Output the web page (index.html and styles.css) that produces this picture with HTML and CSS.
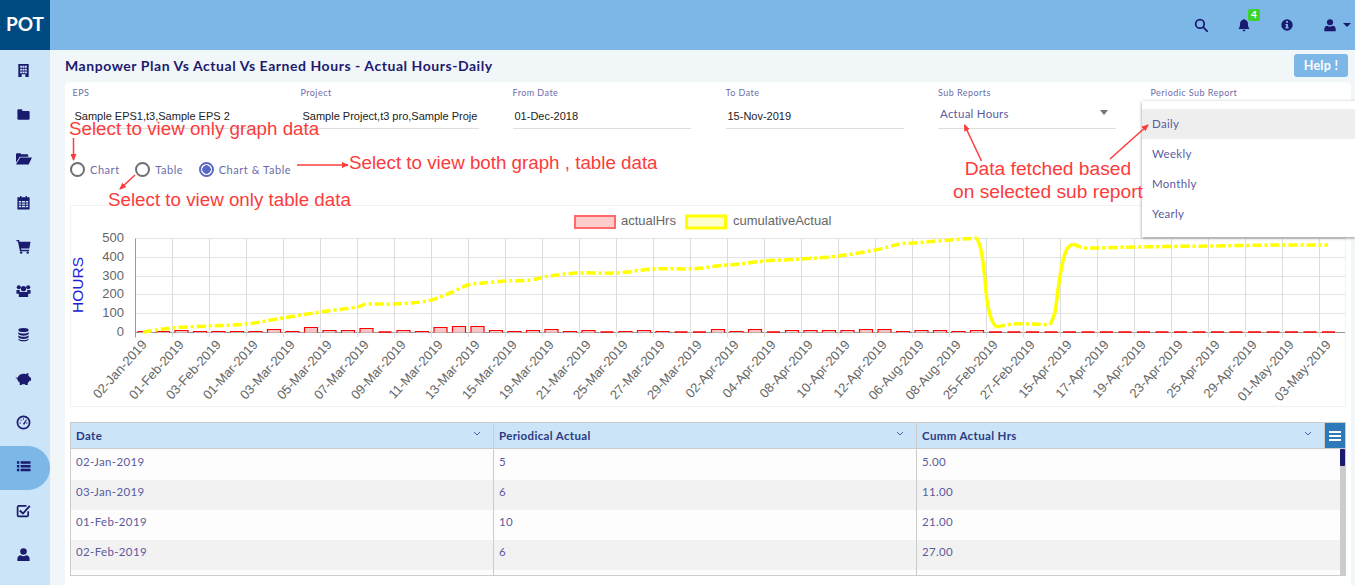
FILE: index.html
```html
<!DOCTYPE html>
<html lang="en">

<head>
    <meta charset="UTF-8">
    <meta name="viewport" content="width=device-width, initial-scale=1.0">
    <title>Manpower Plan Vs Actual Vs Earned Hours</title>
    <link rel="stylesheet" href="styles.css">
</head>

<body>
    <header class="topbar">
        <div class="logo">POT</div>
        <div class="top-icons">
            <svg class="top-icon" viewBox="0 0 16 16"><circle cx="6.8" cy="6.8" r="4.9" class="line"/><path d="M10.5 10.5 15 15" class="line"/></svg>
            <span class="bell">
                <svg class="top-icon" viewBox="0 0 16 16"><path d="M8 1c.6 0 1 .4 1 1 2.3.5 3.5 2.3 3.5 4.5 0 3.5 1 4.8 2 6H1.500c1-1.200 2-2.500 2-6C3.500 4.300 4.700 2.500 7 2c0-.6.400-1 1-1zM6.300 13.500h3.400C9.700 14.500 9 15.200 8 15.200s-1.700-.7-1.700-1.700z"/></svg>
                <span class="badge">4</span>
            </span>
            <svg class="top-icon" viewBox="0 0 16 16"><path fill-rule="evenodd" d="M8 1.500a6.500 6.500 0 1 1 0 13 6.500 6.500 0 0 1 0-13zM6.900 3.500v2h2.200v-2zM6 6.800V8h.9v2.700H6V12h4v-1.300h-.9V6.800z"/></svg>
            <span class="user-menu">
                <svg class="top-icon" viewBox="0 0 16 16"><circle cx="8" cy="4.800" r="3.500"/><path d="M1.500 15v-2.500c0-2.300 1.700-3.700 3.500-3.700 1 .7 2 1 3 1s2-.3 3-1c1.800 0 3.500 1.400 3.500 3.700V15z"/></svg>
                <i class="caret"></i>
            </span>
        </div>
    </header>

    <div class="page">
        <nav class="sidebar">
            <a class="nav-item"><svg class="nav-icon" viewBox="0 0 16 16"><path fill-rule="evenodd" d="M2.500 1h11v14h-11zM4.500 3v2h2V3zm2.500 0v2h2V3zm2.500 0v2h2V3zm-5 3v2h2V6zm2.500 0v2h2V6zm2.500 0v2h2V6zm-5 3v2h2V9zm2.500 0v2h2V9zm2.500 0v2h2V9zM6 12v3h4v-3z"/></svg></a>
            <a class="nav-item"><svg class="nav-icon" viewBox="0 0 16 16"><path d="M1.500 3.500c0-.6.400-1 1-1h3.300c.6 0 1 .4 1 1v.7h6.700c.6 0 1 .4 1 1v7.300c0 .6-.4 1-1 1h-11c-.6 0-1-.4-1-1z"/></svg></a>
            <a class="nav-item"><svg class="nav-icon wide" viewBox="0 0 18 16"><path d="M1 12.500V3.500c0-.6.400-1 1-1h3.500c.6 0 1 .4 1 1h6.500c.6 0 1 .4 1 1V6H5L1 12.500zM5.500 7H18l-3.500 7.500H1z"/></svg></a>
            <a class="nav-item"><svg class="nav-icon" viewBox="0 0 16 16"><path fill-rule="evenodd" d="M1.500 2.500h2.800V1h1.500v1.500h4.400V1h1.500v1.500h2.800v13h-13zM3 6.500V8h2.500V6.500zm3.300 0V8h3.400V6.500zm4.200 0V8H13V6.500zM3 9v1.500h2.500V9zm3.300 0v1.500h3.400V9zm4.200 0v1.500H13V9zM3 11.500V13h2.500v-1.500zm3.300 0V13h3.400v-1.500zm4.200 0V13H13v-1.500z"/></svg></a>
            <a class="nav-item"><svg class="nav-icon" viewBox="0 0 16 16"><path d="M.5 1h2.800l.5 2H15.500l-1.300 7H5.300l.3 1.500h8.400V13H4.200L2 2.500H.5z"/><circle cx="5.500" cy="14.500" r="1.300"/><circle cx="12.500" cy="14.500" r="1.300"/></svg></a>
            <a class="nav-item"><svg class="nav-icon" viewBox="0 0 16 16"><circle cx="3" cy="4.500" r="2.200"/><circle cx="13" cy="4.500" r="2.200"/><circle cx="8" cy="6" r="2.800"/><path d="M.5 7.500h3.500v4H.5zM12 7.500h3.500v4H12zM4 9.500h8c.6 0 1 .4 1 1V15H3v-4.500c0-.6.400-1 1-1z"/></svg></a>
            <a class="nav-item"><svg class="nav-icon" viewBox="0 0 16 16"><ellipse cx="8" cy="3.200" rx="5.500" ry="2.200"/><path d="M2.500 5.200c1 1.200 3 1.700 5.500 1.700s4.500-.5 5.500-1.700v2.300C12.500 8.700 10.500 9.200 8 9.200s-4.500-.5-5.500-1.700zM2.500 8.700c1 1.200 3 1.700 5.500 1.700s4.500-.5 5.500-1.700V11c-1 1.200-3 1.700-5.500 1.700S3.500 12.200 2.500 11zM2.500 12.200c1 1.200 3 1.700 5.500 1.700s4.500-.5 5.500-1.700v.8c0 1.300-2.500 2.300-5.500 2.300s-5.500-1-5.500-2.300z"/></svg></a>
            <a class="nav-item"><svg class="nav-icon wide" viewBox="0 0 18 16"><path d="M.5 6.500c.8.800 1.500.8 2.200.6C3.700 4.800 6 3 9 3c.9 0 1.700.1 2.500.4C12.300 2.500 13.200 2 14.300 2l-.3 2.600c.8.700 1.400 1.400 1.700 2.400H17v3.500h-1.600c-.5.900-1.100 1.600-1.900 2.200V15h-2.800v-1.200c-.5.100-1.100.2-1.700.2s-1.200-.1-1.700-.2V15H5v-2.500C3.400 11.300 2.400 9.800 2.300 8.300 1.400 8.300.8 7.800.5 6.500z"/></svg></a>
            <a class="nav-item"><svg class="nav-icon" viewBox="0 0 16 16"><circle cx="8" cy="8" r="6.500" class="line thick"/><path d="M7.300 9.500 10.800 4.800l.8.500-2.700 5.100zM3.700 8h1.500v1H3.700zM10.800 8h1.500v1h-1.500zM5.300 4.800l1 1-.7.700-1-1zM7.500 3.500h1V5h-1z"/></svg></a>
            <a class="nav-item active"><svg class="nav-icon" viewBox="0 0 16 16"><path d="M1 2.500h2.500V5H1zM5 2.500h10.500V5H5zM1 6.500h2.500V9H1zM5 6.500h10.500V9H5zM1 10.500h2.500V13H1zM5 10.500h10.500V13H5z"/></svg></a>
            <a class="nav-item"><svg class="nav-icon" viewBox="0 0 16 16"><path d="M13 9.500V13c0 .8-.6 1.300-1.300 1.300H3c-.8 0-1.300-.6-1.300-1.300V4.500C1.700 3.700 2.300 3 3 3h7.500" class="line thick"/><path d="M4.800 7.300 7.400 9.800 14 2.300l1.500 1.400-8 8.800L3.300 8.700z"/></svg></a>
            <a class="nav-item"><svg class="nav-icon" viewBox="0 0 16 16"><circle cx="8" cy="4.800" r="3.500"/><path d="M1.500 15v-2.500c0-2.300 1.700-3.700 3.500-3.700 1 .7 2 1 3 1s2-.3 3-1c1.800 0 3.500 1.400 3.500 3.700V15z"/></svg></a>
        </nav>

        <main class="content">
            <div class="title-row">
                <h1 class="title">Manpower Plan Vs Actual Vs Earned Hours - Actual Hours-Daily</h1>
                <button class="help-btn">Help !</button>
            </div>

            <section class="card">
                <div class="filters">
                    <div class="field">
                        <label>EPS</label>
                        <div class="value plain">Sample EPS1,t3,Sample EPS 2</div>
                    </div>
                    <div class="field">
                        <label>Project</label>
                        <div class="value plain">Sample Project,t3 pro,Sample Proje</div>
                    </div>
                    <div class="field">
                        <label>From Date</label>
                        <div class="value plain">01-Dec-2018</div>
                    </div>
                    <div class="field">
                        <label>To Date</label>
                        <div class="value plain">15-Nov-2019</div>
                    </div>
                    <div class="field">
                        <label>Sub Reports</label>
                        <div class="value select">Actual Hours<i class="select-arrow"></i></div>
                    </div>
                    <div class="field">
                        <label>Periodic Sub Report</label>
                    </div>
                </div>

                <div class="radios">
                    <span class="radio"><i class="dot"></i>Chart</span>
                    <span class="radio"><i class="dot"></i>Table</span>
                    <span class="radio on"><i class="dot"></i>Chart &amp; Table</span>
                </div>

                <div class="chart-box">
                    <svg id="chart" class="chart" width="1276" height="200"></svg>
                </div>

                <div class="grid">
                    <div class="grid-head">
                        <div class="head-cell">Date<svg class="chevron" viewBox="0 0 8 5"><path d="M1 1l3 3 3-3"/></svg></div>
                        <div class="head-cell">Periodical Actual<svg class="chevron" viewBox="0 0 8 5"><path d="M1 1l3 3 3-3"/></svg></div>
                        <div class="head-cell">Cumm Actual Hrs<svg class="chevron" viewBox="0 0 8 5"><path d="M1 1l3 3 3-3"/></svg></div>
                        <div class="head-menu"><i></i><i></i><i></i></div>
                    </div>
                    <div class="grid-body">
                        <div class="rows">
                            <div class="row"><span>02-Jan-2019</span><span>5</span><span>5.00</span></div>
                            <div class="row"><span>03-Jan-2019</span><span>6</span><span>11.00</span></div>
                            <div class="row"><span>01-Feb-2019</span><span>10</span><span>21.00</span></div>
                            <div class="row"><span>02-Feb-2019</span><span>6</span><span>27.00</span></div>
                            <div class="row"><span></span><span></span><span></span></div>
                        </div>
                        <div class="scroll"><div class="thumb"></div></div>
                    </div>
                </div>
            </section>
        </main>
    </div>

    <!-- open dropdown -->
    <ul class="dropdown">
        <li class="picked">Daily</li>
        <li>Weekly</li>
        <li>Monthly</li>
        <li>Yearly</li>
    </ul>

    <!-- red notes drawn over the screen -->
    <div class="note n1">Select to view only graph data</div>
    <div class="note n2">Select to view both graph , table data</div>
    <div class="note n3">Select to view only table data</div>
    <div class="note n4">Data fetched based<br>on selected sub report</div>
    <svg class="arrows" width="1355" height="585">
        <defs>
            <marker id="head" markerWidth="7" markerHeight="6" refX="6" refY="3" orient="auto" markerUnits="userSpaceOnUse">
                <path d="M0 0 7 3 0 6z" fill="#fb3c3c" stroke="none"/>
            </marker>
        </defs>
        <path d="M73.5 138V160" marker-end="url(#head)"/>
        <path d="M297 165H348" marker-end="url(#head)"/>
        <path d="M135 175 120 189" marker-end="url(#head)"/>
        <path d="M981.5 161 964.5 125" marker-end="url(#head)"/>
        <path d="M1110 159 1148 125" marker-end="url(#head)"/>
    </svg>

    <script src="chart.js"></script>
</body>

</html>
```

FILE: styles.css
```css
* {
    margin: 0;
    padding: 0;
    box-sizing: border-box;
    list-style: none;
}

html,
body {
    width: 1355px;
    height: 585px;
    overflow: hidden;
}

body {
    position: relative;
    font-family: Lato, "Liberation Sans", sans-serif;
    font-size: 11.5px;
    color: #5b5b9e;
    background: #f1f6f9;
}

/* top bar */
.topbar {
    height: 50px;
    display: flex;
    justify-content: space-between;
    background: #7cb7e8;
}

.logo {
    width: 50px;
    background: #004a82;
    color: #fff;
    font-size: 19px;
    font-weight: 700;
    line-height: 48px;
    text-align: center;
}

.top-icons {
    display: flex;
    align-items: center;
    gap: 29px;
    padding-right: 4px;
}

.top-icon {
    display: block;
    width: 14px;
    height: 14px;
    fill: #1a1a6e;
}

.bell {
    position: relative;
}

.badge {
    position: absolute;
    left: 11px;
    top: -9px;
    width: 12px;
    height: 12px;
    border-radius: 2px;
    background: #3bd32c;
    color: #fff;
    font-size: 10px;
    font-weight: 700;
    line-height: 11px;
    text-align: center;
}

.user-menu {
    display: flex;
    align-items: center;
    gap: 6px;
}

.caret {
    width: 0;
    height: 0;
    border-left: 4px solid transparent;
    border-right: 4px solid transparent;
    border-top: 4px solid #1a1a6e;
}

.line {
    fill: none;
    stroke: #1a1a6e;
    stroke-width: 2;
    stroke-linecap: round;
}

.thick {
    stroke-width: 1.8;
}

.page {
    display: flex;
    height: 535px;
}

/* side menu */
.sidebar {
    width: 50px;
    flex: none;
    background: #cbe4f8;
}

.nav-item {
    height: 44px;
    display: flex;
    align-items: center;
    justify-content: center;
    padding: 0 4px 3px 0;
}

.nav-item.active {
    background: #7cb7e8;
    border-radius: 0 22px 22px 0;
}

.nav-icon {
    width: 15px;
    height: 15px;
    fill: #1a1a6e;
}

.nav-icon.wide {
    width: 17px;
}

.content {
    flex: 1;
    min-width: 0;
    padding: 4px 4px 0 15px;
    display: flex;
    flex-direction: column;
}

.title-row {
    height: 28px;
    display: flex;
    align-items: flex-start;
    justify-content: space-between;
}

.title {
    font-size: 14px;
    font-weight: 700;
    letter-spacing: .55px;
    line-height: 24px;
    color: #1d1a6e;
}

.help-btn {
    width: 54px;
    height: 23px;
    margin-right: 3px;
    border: 0;
    border-radius: 3px;
    background: #7cb7e8;
    color: #fff;
    font: 700 12.5px Lato, sans-serif;
    letter-spacing: .3px;
}

.card {
    flex: 1;
    background: #fff;
    border-radius: 4px 4px 0 0;
    padding: 0 5px;
}

/* filters row */
.filters {
    display: grid;
    grid-template-columns: 228px 212px 213px 212.5px 212.5px 198px;
    height: 46px;
}

.field {
    padding: 5px 0 0 2.5px;
}

.field label {
    display: block;
    font-size: 9px;
    letter-spacing: .45px;
    line-height: 11px;
    color: #6d6da8;
}

.value {
    position: relative;
    width: 178px;
    height: 25px;
    margin-top: 6px;
    border-bottom: 1px solid #ddd;
    white-space: nowrap;
    overflow: hidden;
}

.field:first-child .value {
    width: 193px;
}

.plain {
    font: 11px/24px "Liberation Sans", sans-serif;
    color: #222;
    padding-left: 2px;
}

.select {
    margin-top: 3px;
    height: 28px;
    line-height: 25px;
    padding-left: 2px;
    letter-spacing: .25px;
}

.select-arrow {
    position: absolute;
    right: 8px;
    top: 9px;
    width: 0;
    height: 0;
    border-left: 4.5px solid transparent;
    border-right: 4.5px solid transparent;
    border-top: 5px solid #757575;
}

/* radios */
.radios {
    height: 77px;
    padding-top: 33px;
    display: flex;
    gap: 15.5px;
    font-size: 11px;
    letter-spacing: .55px;
}

.radio {
    display: flex;
    align-items: center;
    height: 16px;
    gap: 5px;
    color: #6d6da8;
}

.dot {
    width: 15px;
    height: 15px;
    border: 2px solid #6f6f6f;
    border-radius: 50%;
    background: #fff;
}

.radio.on .dot {
    border-color: #5968c4;
    background: radial-gradient(circle, #5968c4 0 4px, #fff 4.5px);
}

/* chart */
.chart-box {
    width: 1276px;
    height: 202px;
    border: 1px solid #f2f2f2;
    overflow: hidden;
}

.chart {
    display: block;
    margin: 0 -1px;
}

.axis-text {
    font: 13px "Liberation Sans", sans-serif;
    fill: #666;
}

.axis-title {
    font: 15.5px "Liberation Sans", sans-serif;
    fill: #2020d8;
}

/* table */
.grid {
    width: 1276px;
    height: 154px;
    margin-top: 15px;
    border: 1px solid #ccc;
}

.grid-head {
    height: 26px;
    display: grid;
    grid-template-columns: 423px 423px 408px 20px;
    background: #cbe4f8;
    border-bottom: 1px solid #ccc;
}

.head-cell {
    display: flex;
    align-items: center;
    justify-content: space-between;
    padding: 0 12px 0 5px;
    border-right: 1px solid #ccc;
    font-weight: 700;
    letter-spacing: .35px;
    color: #2c3a84;
}

.chevron {
    width: 8px;
    height: 5px;
    margin-top: -4px;
    fill: none;
    stroke: #5b5b9e;
    stroke-width: 1;
}

.head-menu {
    display: flex;
    flex-direction: column;
    justify-content: center;
    gap: 2px;
    padding: 0 4px;
    background: #2e7ab8;
}

.head-menu i {
    height: 2px;
    background: #fff;
}

.grid-body {
    display: flex;
    height: 126px;
}

.rows {
    flex: 1;
    overflow: hidden;
    background: #fdfdfd;
}

.row {
    height: 30px;
    display: grid;
    grid-template-columns: 423px 423px 1fr;
    letter-spacing: .35px;
    line-height: 24px;
}

.row:first-child {
    height: 31px;
    line-height: 26px;
}

.row span {
    padding-left: 5px;
    border-right: 1px solid #ccc;
}

.row span:last-child {
    border-right: 0;
}

.row:nth-child(even) {
    background: #f2f2f2;
}

.scroll {
    width: 5px;
    background: #ccc;
}

.thumb {
    height: 17px;
    background: #1a1a6e;
    border-radius: 1px;
}

/* dropdown over the page */
.dropdown {
    position: absolute;
    left: 1142px;
    top: 101px;
    width: 213px;
    height: 136px;
    padding-top: 8px;
    background: #fff;
    box-shadow: 0 1px 3px rgba(0, 0, 0, .45);
    letter-spacing: .3px;
}

.dropdown li {
    height: 30px;
    padding-left: 10px;
    line-height: 30px;
}

.dropdown .picked {
    background: #eee;
}

/* annotations */
.note {
    position: absolute;
    font: 18.75px/23px "Liberation Sans", sans-serif;
    color: #fb3c3c;
    white-space: nowrap;
}

.n1 {
    left: 69px;
    top: 117px;
}

.n2 {
    left: 349px;
    top: 151px;
}

.n3 {
    left: 108px;
    top: 188px;
}

.n4 {
    left: 953px;
    top: 157px;
    font-size: 19.2px;
    text-align: center;
}

.arrows {
    position: absolute;
    left: 0;
    top: 0;
    fill: none;
    stroke: #fb3c3c;
    stroke-width: 1.5;
}
```

FILE: chart.js
```js
// svg sits at 70/206 on the page, the numbers below are page pixels
var ox = 70, oy = 206;
var svg = document.getElementById('chart');
var ns = 'http://www.w3.org/2000/svg';
var left = 135.5, right = 1345.5, top0 = 238.5, bottom = 332.5;

function add(name, attrs, text) {
    var el = document.createElementNS(ns, name);
    for (var k in attrs) el.setAttribute(k, attrs[k]);
    if (text) el.textContent = text;
    svg.appendChild(el);
    return el;
}

function gridLine(x1, y1, x2, y2, color) {
    add('line', { x1: x1 - ox, y1: y1 - oy, x2: x2 - ox, y2: y2 - oy, stroke: color, 'stroke-width': 1 });
}

// legend
add('rect', { x: 575 - ox, y: 216 - oy, width: 40, height: 12, fill: '#ffcccc', stroke: '#ff6b6b', 'stroke-width': 2 });
add('text', { x: 621 - ox, y: 225 - oy, 'class': 'axis-text' }, 'actualHrs');
add('rect', { x: 686.5 - ox, y: 216 - oy, width: 39, height: 12, fill: '#ffffcc', stroke: '#ffff00', 'stroke-width': 3 });
add('text', { x: 733 - ox, y: 225 - oy, 'class': 'axis-text' }, 'cumulativeActual');

// y axis
var ys = [238.5, 257.5, 276.5, 294.5, 313.5, 332.5];
var yLabels = ['500', '400', '300', '200', '100', '0'];
for (var i = 0; i < ys.length; i++) {
    gridLine(left, ys[i], right, ys[i], i == 5 ? '#999' : '#e3e3e3');
    add('text', { x: 124 - ox, y: ys[i] + 3.5 - oy, 'text-anchor': 'end', 'class': 'axis-text' }, yLabels[i]);
}
add('text', { transform: 'translate(' + (83 - ox) + ',' + (285 - oy) + ') rotate(-90)', 'text-anchor': 'middle', 'class': 'axis-title' }, 'HOURS');

// x axis
var dates = ['02-Jan', '01-Feb', '03-Feb', '01-Mar', '03-Mar', '05-Mar', '07-Mar', '09-Mar', '11-Mar', '13-Mar', '15-Mar',
    '19-Mar', '21-Mar', '25-Mar', '27-Mar', '29-Mar', '02-Apr', '04-Apr', '08-Apr', '10-Apr', '12-Apr', '06-Aug', '08-Aug',
    '25-Feb', '27-Feb', '15-Apr', '17-Apr', '19-Apr', '23-Apr', '25-Apr', '29-Apr', '01-May', '03-May'];
for (var i = 0; i < dates.length; i++) {
    var x = left + 37 * i;
    gridLine(x, top0, x, bottom + 5, i == 0 ? '#999' : '#dcdcdc');
    add('text', {
        transform: 'translate(' + (x + 12 - ox) + ',' + (345 - oy) + ') rotate(-48)',
        'text-anchor': 'end', 'class': 'axis-text'
    }, dates[i] + '-2019');
}
gridLine(right, top0, right, bottom, '#e3e3e3');

// bars, height in px
var bars = [1, 1, 2, 1, 1, 1, 1, 3, 1, 5, 2, 2, 4, 0, 2, 1, 5, 6, 6, 2, 1, 2, 3, 1, 2, 0, 1, 2, 1, 0, 0, 3, 1, 3, 0, 2, 2, 2, 2, 3, 3, 1, 2, 2, 1, 2];
for (var i = 0; i < 65; i++) {
    var h = bars[i] || 0;
    var cx = 144.5 + 18.5 * i;
    if (h == 0) {
        add('line', { x1: cx - 6.5 - ox, x2: cx + 6.5 - ox, y1: 332 - oy, y2: 332 - oy, stroke: '#ff0000', 'stroke-width': 1.5 });
    } else {
        add('path', {
            d: 'M' + (cx - 6.5 - ox) + ' ' + (332.5 - oy) + 'v' + (-h) + 'h13v' + h,
            fill: '#f6c4c4', stroke: '#ff0000', 'stroke-width': 1.2
        });
    }
}

// yellow line, smoothed between the points
function smooth(pts) {
    var d = 'M' + (pts[0][0] - ox) + ' ' + (pts[0][1] - oy);
    for (var i = 0; i < pts.length - 1; i++) {
        var p0 = pts[i - 1] || pts[i], p1 = pts[i], p2 = pts[i + 1], p3 = pts[i + 2] || p2;
        d += 'C' + (p1[0] + (p2[0] - p0[0]) / 6 - ox) + ' ' + (p1[1] + (p2[1] - p0[1]) / 6 - oy) + ' ' +
            (p2[0] - (p3[0] - p1[0]) / 6 - ox) + ' ' + (p2[1] - (p3[1] - p1[1]) / 6 - oy) + ' ' +
            (p2[0] - ox) + ' ' + (p2[1] - oy);
    }
    return d;
}

var dashed = { fill: 'none', stroke: '#ffff00', 'stroke-width': 3.5, 'stroke-dasharray': '9 3 3 3' };
var solid = { fill: 'none', stroke: '#ffff00', 'stroke-width': 3.5 };

function line(pts, style) {
    var attrs = { d: smooth(pts) };
    for (var k in style) attrs[k] = style[k];
    add('path', attrs);
}

line([[143, 332], [172, 328], [209, 326], [246, 324], [283, 318], [320, 312], [357, 307], [367, 304], [394, 304], [427, 301],
    [450, 293], [468, 285], [483, 283], [506, 281], [530, 280], [550, 276], [579, 273], [616, 273], [653, 269], [690, 269],
    [703, 268], [717, 266], [740, 264], [764, 261], [801, 259], [838, 256], [875, 250], [900, 244], [913, 243], [950, 240], [977, 238]], dashed);
line([[977, 238], [981, 250], [984, 270], [987, 300], [991, 318], [996, 327]], solid);
line([[996, 327], [1013, 324], [1033, 324], [1050, 325]], dashed);
line([[1050, 325], [1055, 312], [1058, 290], [1062, 265], [1067, 249], [1073, 244]], solid);
line([[1073, 244], [1088, 248], [1134, 247], [1208, 246], [1282, 245], [1328, 245]], dashed);
```
